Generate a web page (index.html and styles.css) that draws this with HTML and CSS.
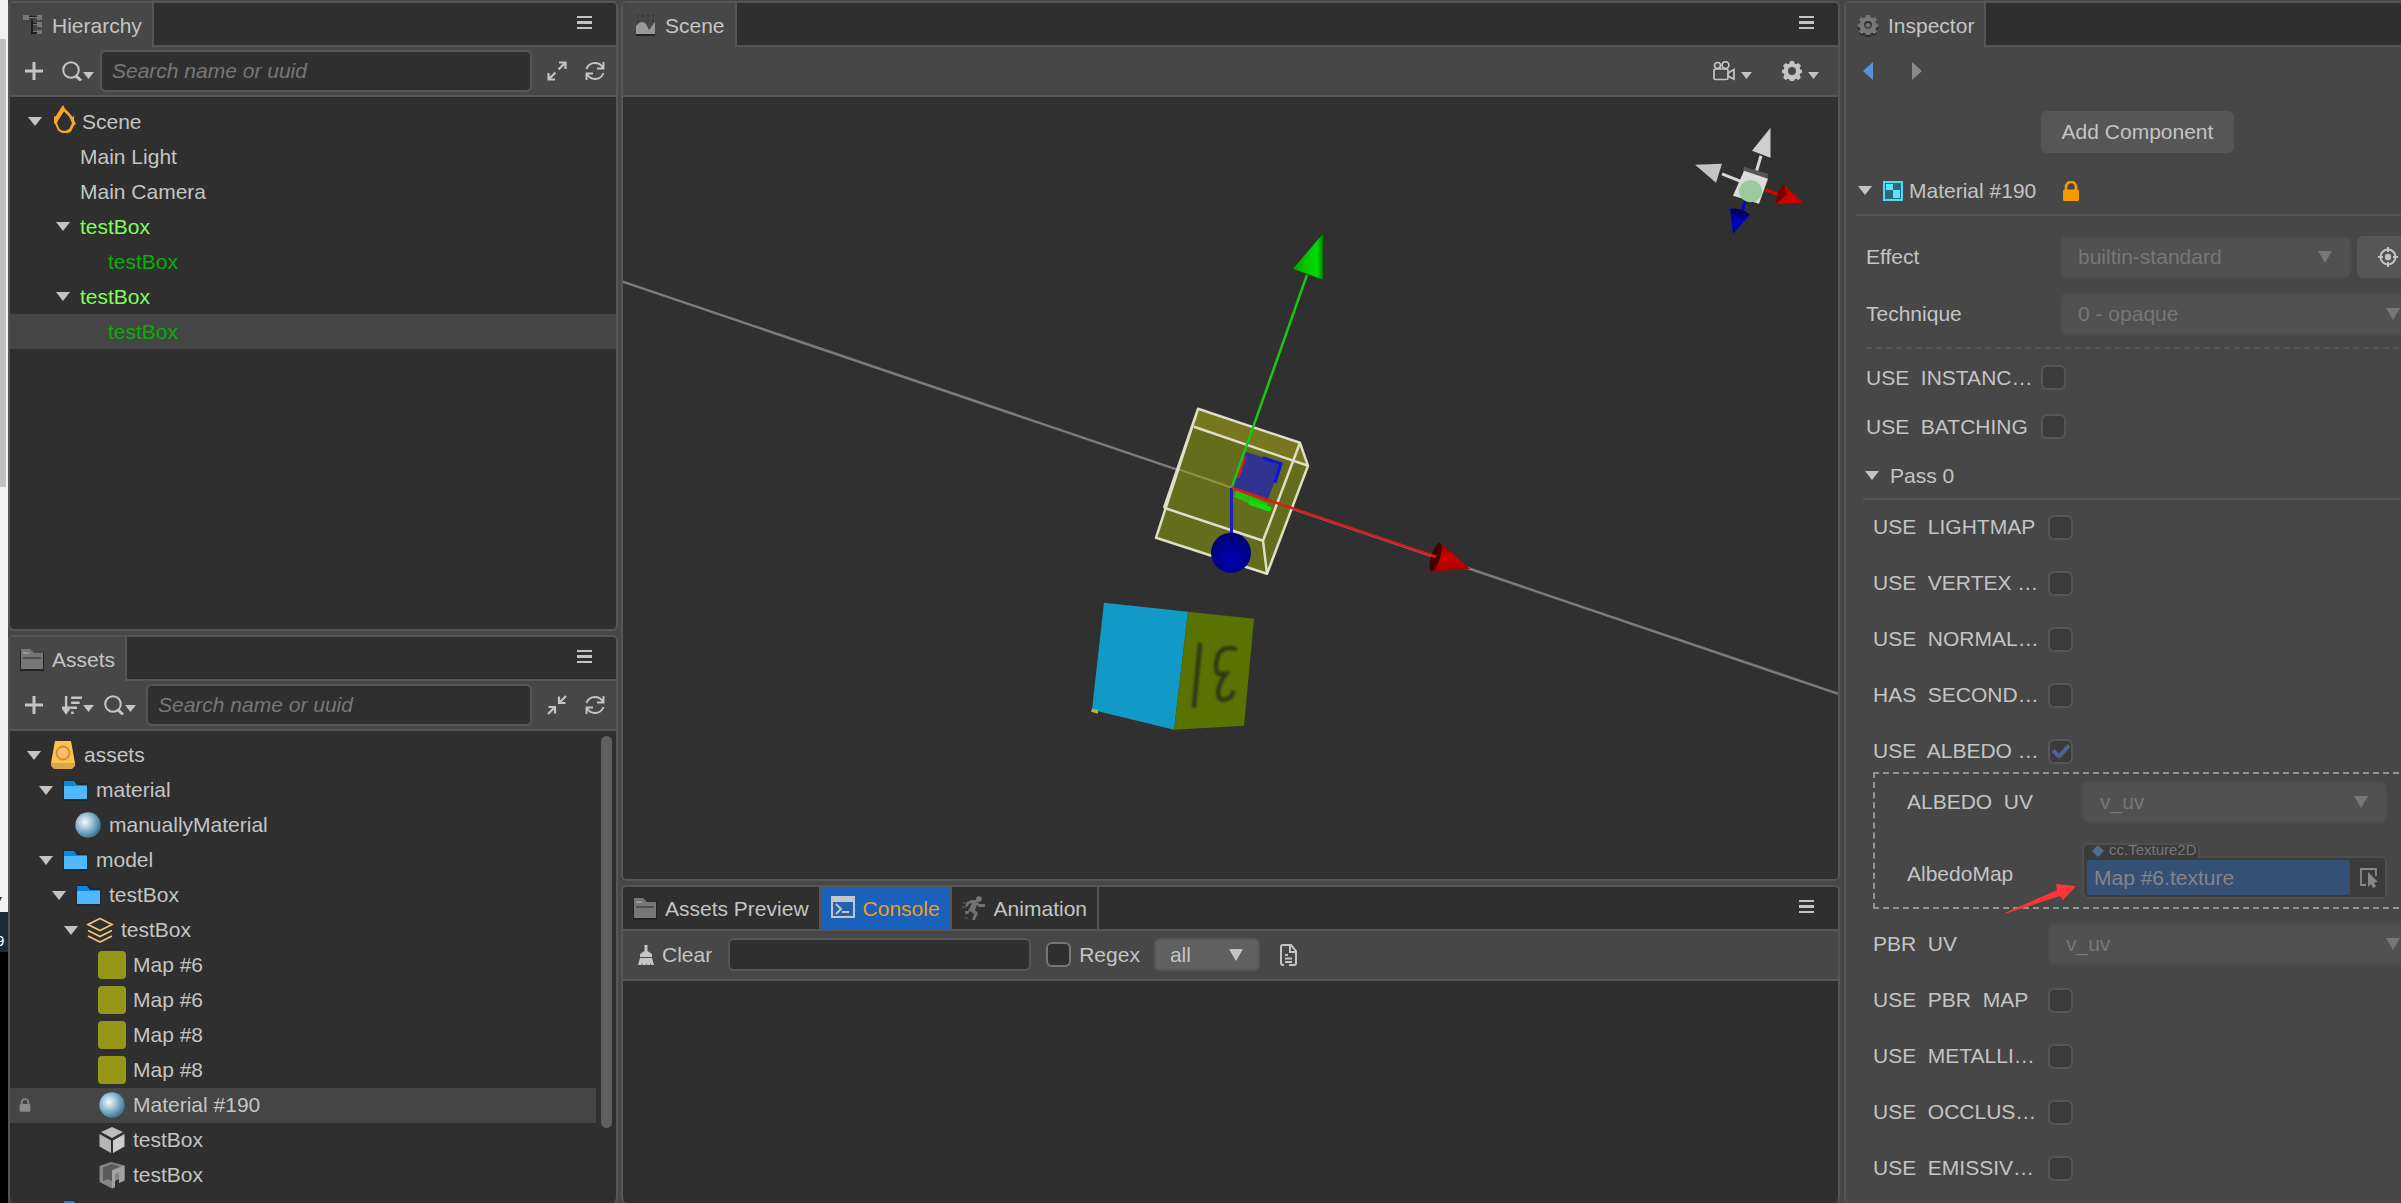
FILE: index.html
```html
<!DOCTYPE html>
<html lang="en">
<head>
<meta charset="utf-8">
<title>Scene Editor</title>
<link rel="stylesheet" href="styles.css">
</head>
<body>
<svg class="sprite" aria-hidden="true">
  <defs>
    <radialGradient id="ball" cx="38%" cy="38%" r="62%"><stop offset="0" stop-color="#f4fafc"/><stop offset=".4" stop-color="#a8cbdc"/><stop offset="1" stop-color="#417a9c"/></radialGradient>
    <linearGradient id="coneGreen" x1="0" x2="1"><stop offset="0" stop-color="#00a800"/><stop offset=".8" stop-color="#00dd00"/><stop offset="1" stop-color="#007a00"/></linearGradient>
    <linearGradient id="coneRed" x1="0" x2="0" y1="0" y2="1"><stop offset="0" stop-color="#8a0000"/><stop offset=".5" stop-color="#d00000"/><stop offset="1" stop-color="#a00000"/></linearGradient>
    <radialGradient id="coneBlue" cx="50%" cy="70%" r="60%"><stop offset="0" stop-color="#0000b4"/><stop offset="1" stop-color="#000078"/></radialGradient>
    <filter id="soft"><feGaussianBlur stdDeviation="1.2"/></filter>
  </defs>
  <symbol id="caret" viewBox="0 0 14 9"><path d="M0 0h14L7 9z"/></symbol>
  <symbol id="drop" viewBox="0 0 14 12"><path d="M0 0h14L7 12z"/></symbol>
  <symbol id="menu" viewBox="0 0 15 13"><path d="M0 0h15v2H0zM0 5h15v3H0zM0 11h15v2H0z"/></symbol>
  <symbol id="plus" viewBox="0 0 20 20"><path d="M8.500 1h3v7.500H19v3h-7.500V19h-3v-7.500H1v-3h7.500z"/></symbol>
  <symbol id="search" viewBox="0 0 20 20"><circle cx="9" cy="9" r="7.800" fill="none" stroke="currentColor" stroke-width="2"/><path d="M14 15l5 4.500" stroke="currentColor" stroke-width="3"/></symbol>
  <symbol id="expand" viewBox="0 0 20 20"><path d="M12 1.500h6.500V8M18 2l-6.500 6.500M1.500 12v6.500H8M2 18l6.500-6.500" fill="none" stroke="currentColor" stroke-width="2.200"/></symbol>
  <symbol id="shrink" viewBox="0 0 20 20"><path d="M12 1.500V8h6.500M12.500 7.500L19 1M1.500 12H8v6.500M7.500 12.500L1 19" fill="none" stroke="currentColor" stroke-width="2.200"/></symbol>
  <symbol id="refresh" viewBox="0 0 20 20"><path d="M1.500 8C3 4 6 2 10 2c3 0 6 1.500 8 4.500M18.500 1v6.500H12M18.500 12c-1.500 4-4.500 6-8.500 6-3 0-6-1.500-8-4.500M1.500 19v-6.500H8" fill="none" stroke="currentColor" stroke-width="1.900"/></symbol>
  <symbol id="sort" viewBox="0 0 22 20"><path d="M4.500 0v15M.5 13l4 5.500 4-5.500zM10 2h12M10 7.500h9.500M10 13h6.500M10 18.500h3" stroke="currentColor" stroke-width="2.600" fill="currentColor"/></symbol>
  <symbol id="tree" viewBox="0 0 24 24"><path d="M6 4v0h11M12 6v14h6M12 11h6" fill="none" stroke="#1f1f1f" stroke-width="2"/><path d="M3 2h6v5H3zM17 2h5v5h-5zM17 9h5v5h-5zM17 17h5v4h-5zM9 4h8v1H9zM11 5h2v14h4v-1h-4v-6h4v-1h-4V5z" fill="#777"/></symbol>
  <symbol id="folder-gray" viewBox="0 0 24 24"><path d="M0 3h10l4 3h10v18H0z" fill="#222"/><path d="M1 2h9l4 4h9v16H1z" fill="#777"/><path d="M3 10h18v2H3z" fill="#505050"/><path d="M3 5h5l2 2H3z" fill="#999"/></symbol>
  <symbol id="picture" viewBox="0 0 24 24"><path d="M3 21V13q6-7 10-2l3 6 6-8v12z" fill="#999"/><path d="M3 21h19v2H3z" fill="#222"/><path d="M4 2h2v2H4zM9 2h2v2H9zM14 2h2v2h-2zM19 2h2v2h-2zM14 7h2v2h-2zM19 7h2v2h-2zM4 7h2v2H4z" fill="#363636"/></symbol>
  <symbol id="gear" viewBox="0 0 20 20"><path fill-rule="evenodd" d="M8 0h4l.6 2.500 1.600.8L16.500 2 19 4.500l-1.400 2.300.6 1.700 1.800.5v3l-1.800.5-.7 1.700L19 16.500 16.500 19l-2.300-1.300-1.600.7L12 20H8l-.6-1.600-1.600-.7L3.500 19 1 16.500l1.500-2.300-.7-1.700L0 12V9l1.800-.5.6-1.700L1 4.500 3.500 2l2.300 1.300 1.600-.8zM10 6a4 4 0 1 0 0 8 4 4 0 0 0 0-8z"/></symbol>
  <symbol id="gear-tab" viewBox="0 0 24 24"><use href="#gear" x="2" y="4" width="20" height="20" fill="#2a2a2a"/><use href="#gear" x="2" y="2" width="20" height="20" fill="#777"/><circle cx="12" cy="12" r="2" fill="#777"/></symbol>
  <symbol id="console" viewBox="0 0 24 24"><path d="M0 0h24v22H0z" fill="#c6c6c6"/><path d="M2 6h20v14H2z" fill="#2262b4"/><path d="M5 8l5 5-5 5M11 16h7" fill="none" stroke="#c6c6c6" stroke-width="2"/></symbol>
  <symbol id="runner" viewBox="0 0 24 24"><circle cx="17" cy="3" r="2.800" fill="#7b7b7b"/><path d="M9 4h6l2 4h6v3h-6l-2-2-2 5 3 3-3 7h-3l2-6-4-3-2 3H3v-3h3l4-8-3 1-2 3-2-1 2-4z" fill="#707070"/><path d="M1 7h4M0 11h4M3 22h3" stroke="#555" stroke-width="1.500"/></symbol>
  <symbol id="camera" viewBox="0 0 22 20"><g fill="none" stroke="currentColor" stroke-width="1.700"><circle cx="4.500" cy="4.500" r="3"/><circle cx="12.500" cy="4" r="3.400"/><rect x="1" y="8" width="14" height="10.500" rx="1.500"/><path d="M15 12l6-3.500v9.500l-6-3z"/></g></symbol>
  <symbol id="flame" viewBox="0 0 22 28"><path fill-rule="evenodd" d="M9 0Q10.500 4 14.500 7l4 5 1.500-1.500V15l2 4-2 1.500-3 6-3 1.500H8l-4-2.500L1 19 0 18v-7l1.500.5L5 6zM10 6.500L5 14l-2 4 2.500 6 3 1.700h3.500l3.500-2.200L18 18l-3-6.500z" fill="#f5a62b"/></symbol>
  <symbol id="db" viewBox="0 0 28 28"><path d="M6 0h16l4 22H2z" fill="#ffc24b"/><path d="M2 22h24v3l-3 3H5l-3-3z" fill="#dba548"/><circle cx="14" cy="12" r="6.500" fill="#ffbd6a" stroke="#c99138" stroke-width="1.800"/></symbol>
  <symbol id="folder" viewBox="0 0 28 28"><path d="M2 4h12l4 3h9v18H2z" fill="#1f2a30"/><path d="M3 5h10l3 4h10v6H3z" fill="#0888da"/><path d="M3 10h23v13H3z" fill="#50b8ff"/></symbol>
  <symbol id="sphere" viewBox="0 0 28 28"><circle cx="14" cy="14" r="12.700" fill="url(#ball)"/></symbol>
  <symbol id="layers" viewBox="0 0 28 28"><path d="M14 2.500l12 6-12 6-12-6zM2 14.500l12 6 12-6M2 20l12 6 12-6" fill="none" stroke="#f1c66c" stroke-width="1.700"/></symbol>
  <symbol id="texture" viewBox="0 0 28 28"><rect width="28" height="28" rx="4" fill="#979717"/></symbol>
  <symbol id="cube" viewBox="0 0 28 28"><path d="M14 1l11 5-11 6L3 6z" fill="#bdbdbd"/><path d="M1.500 8L13 14.500V27L1.500 20.500z" fill="#b5b5b5"/><path d="M26.500 8L15 14.500V27l11.500-6.500z" fill="#cbcbcb"/></symbol>
  <symbol id="mesh" viewBox="0 0 28 28"><path d="M1.500 5L13 1l13.500 3.500v15L21 22v-4l-4 2v6l-3 1.500L1.500 21z" fill="#858585"/><path d="M5 6.500L14 3l8 2.500-8 4V20l-4-2-5 2z" fill="#5a5a5a"/><path d="M14 9.500l12.500-5v15L21 22V11l-4 2v13l-3 1.500z" fill="#a2a2a2"/></symbol>
  <symbol id="lock" viewBox="0 0 18 20"><path d="M4 9V6a5 5 0 0 1 10 0v3" fill="none" stroke="currentColor" stroke-width="2.600"/><rect x="1" y="8.500" width="16" height="11.500" rx="1.500"/></symbol>
  <symbol id="material" viewBox="0 0 20 20"><rect x="1" y="1" width="18" height="18" fill="#2b6a78" stroke="#4edcf5" stroke-width="2"/><path d="M3 3h7v6H3zM10 9h7v8h-7z" fill="#5be3fa"/></symbol>
  <symbol id="target" viewBox="0 0 20 20"><circle cx="10" cy="10" r="7.500" fill="none" stroke="currentColor" stroke-width="2"/><circle cx="10" cy="10" r="3.200"/><path d="M9 0h2v5H9zM9 15h2v5H9zM0 9h5v2H0zM15 9h5v2h-5z"/></symbol>
  <symbol id="broom" viewBox="0 0 16 20"><path d="M6.500 0h3v6l4.500 3v3H2V9l4.500-3zM2 13h12l2 7h-3l-1-2v2H9l-1-2v2H5l-1-1-1 1H0z"/></symbol>
  <symbol id="doc" viewBox="0 0 17 22"><path d="M4 21H3q-2 0-2-2V3q0-2 2-2h8l5 6v12q0 2-2 2H9M10 1v7h6M5 11h3M5 14.500h7M5 18h7" fill="none" stroke="currentColor" stroke-width="2"/></symbol>
  <symbol id="pick" viewBox="0 0 20 20"><path d="M6 17H1V1h15v7" fill="none" stroke="currentColor" stroke-width="1.800"/><path d="M8 4l10 10-4 .5 2 4-3 1.500-2-4-3 3z"/></symbol>
  <symbol id="check" viewBox="0 0 18 14"><path d="M1 6.500l6 6L17 1.500" fill="none" stroke="#4a6597" stroke-width="4"/></symbol>
</svg>

<div class="editor">
  <aside class="edge" aria-hidden="true">
    <span class="edge-thumb"></span><span class="edge-page">▾</span><span class="edge-bar">9</span><span class="edge-rest"></span>
  </aside>

  <div class="column">
    <section class="panel hierarchy">
      <header class="tabs">
        <div class="tab active"><svg class="i24"><use href="#tree"/></svg>Hierarchy</div>
        <button class="menu" aria-label="Menu"><svg><use href="#menu"/></svg></button>
      </header>
      <div class="toolbar">
        <button class="tool" aria-label="Add"><svg class="i20"><use href="#plus"/></svg></button>
        <button class="tool" aria-label="Search type"><svg class="i20"><use href="#search"/></svg><svg class="mini"><use href="#caret"/></svg></button>
        <input class="field search" type="text" placeholder="Search name or uuid" aria-label="Search nodes">
        <button class="end" aria-label="Expand all"><svg class="i20"><use href="#expand"/></svg></button>
        <button class="end" aria-label="Refresh"><svg class="i20"><use href="#refresh"/></svg></button>
      </div>
      <ul class="tree">
        <li class="row n0"><svg class="caret"><use href="#caret"/></svg><svg class="flame"><use href="#flame"/></svg>Scene</li>
        <li class="row n1"><span class="caret"></span>Main Light</li>
        <li class="row n1"><span class="caret"></span>Main Camera</li>
        <li class="row n1 prefab"><svg class="caret"><use href="#caret"/></svg>testBox</li>
        <li class="row n2 child"><span class="caret"></span>testBox</li>
        <li class="row n1 prefab"><svg class="caret"><use href="#caret"/></svg>testBox</li>
        <li class="row n2 child selected"><span class="caret"></span>testBox</li>
      </ul>
    </section>

    <section class="panel assets">
      <header class="tabs">
        <div class="tab active"><svg class="i24"><use href="#folder-gray"/></svg>Assets</div>
        <button class="menu" aria-label="Menu"><svg><use href="#menu"/></svg></button>
      </header>
      <div class="toolbar">
        <button class="tool" aria-label="Add"><svg class="i20"><use href="#plus"/></svg></button>
        <button class="tool wide" aria-label="Sort"><svg class="i20"><use href="#sort"/></svg><svg class="mini"><use href="#caret"/></svg></button>
        <button class="tool wide" aria-label="Search type"><svg class="i20"><use href="#search"/></svg><svg class="mini"><use href="#caret"/></svg></button>
        <input class="field search" type="text" placeholder="Search name or uuid" aria-label="Search assets">
        <button class="end" aria-label="Collapse all"><svg class="i20"><use href="#shrink"/></svg></button>
        <button class="end" aria-label="Refresh"><svg class="i20"><use href="#refresh"/></svg></button>
      </div>
      <div class="scroller">
        <ul class="tree">
          <li class="row a0"><svg class="caret"><use href="#caret"/></svg><svg class="i28"><use href="#db"/></svg>assets</li>
          <li class="row a1"><svg class="caret"><use href="#caret"/></svg><svg class="i28"><use href="#folder"/></svg>material</li>
          <li class="row a2"><span class="caret"></span><svg class="i28"><use href="#sphere"/></svg>manuallyMaterial</li>
          <li class="row a1"><svg class="caret"><use href="#caret"/></svg><svg class="i28"><use href="#folder"/></svg>model</li>
          <li class="row a2"><svg class="caret"><use href="#caret"/></svg><svg class="i28"><use href="#folder"/></svg>testBox</li>
          <li class="row a3"><svg class="caret"><use href="#caret"/></svg><svg class="i28"><use href="#layers"/></svg>testBox</li>
          <li class="row a4"><span class="caret"></span><svg class="i28"><use href="#texture"/></svg>Map #6</li>
          <li class="row a4"><span class="caret"></span><svg class="i28"><use href="#texture"/></svg>Map #6</li>
          <li class="row a4"><span class="caret"></span><svg class="i28"><use href="#texture"/></svg>Map #8</li>
          <li class="row a4"><span class="caret"></span><svg class="i28"><use href="#texture"/></svg>Map #8</li>
          <li class="row a4 selected"><svg class="row-lock"><use href="#lock"/></svg><span class="caret"></span><svg class="i28"><use href="#sphere"/></svg>Material #190</li>
          <li class="row a4"><span class="caret"></span><svg class="i28"><use href="#cube"/></svg>testBox</li>
          <li class="row a4"><span class="caret"></span><svg class="i28"><use href="#mesh"/></svg>testBox</li>
          <li class="row a1"><span class="caret"></span><svg class="i28"><use href="#folder"/></svg></li>
        </ul>
        <div class="scrollbar"><div class="thumb"></div></div>
      </div>
    </section>
  </div>

  <div class="column">
    <section class="panel scene">
      <header class="tabs">
        <div class="tab active"><svg class="i24"><use href="#picture"/></svg>Scene</div>
        <button class="menu" aria-label="Menu"><svg><use href="#menu"/></svg></button>
      </header>
      <div class="toolbar scene-tools">
        <button aria-label="Camera"><svg class="i22"><use href="#camera"/></svg><svg class="mini"><use href="#caret"/></svg></button>
        <button aria-label="Settings"><svg class="i20"><use href="#gear"/></svg><svg class="mini"><use href="#caret"/></svg></button>
      </div>
      <svg class="viewport" viewBox="623 96 1215 784" preserveAspectRatio="xMidYMid slice" role="img" aria-label="3D scene">
        <path d="M610 277.500L1850 698" stroke="#7c7c7c" stroke-width="2.500"/>
        <path d="M1198 409l102 34 8 23-41 108-111-36z" fill="#636d1b"/>
        <path d="M1198 409l102 34 8 23-114-39z" fill="#77771f"/>
        <path d="M1177 469l55 19" stroke="#8c9440" stroke-width="2"/>
        <path d="M1198 409l102 34 8 23-41 108-111-36zM1194 427l114 39M1164 508l99 33 37-98M1263 541l4 33M1198 409l-34 99" fill="none" stroke="#dedfc6" stroke-width="2.500" stroke-linejoin="round"/>
        <path d="M1245 452l37 11-14 36-35-11z" fill="#30338f"/>
        <path d="M1263 458l18 6-6 19" fill="none" stroke="#1111d8" stroke-width="3"/>
        <path d="M1235 494l32 13" stroke="#2abd0c" stroke-width="7"/><path d="M1251 503l18 6" stroke="#0ee00e" stroke-width="5" stroke-linecap="round"/>
        <path d="M1245 457l-7 21" stroke="#d01c2c" stroke-width="3"/>
        <path d="M1231.500 488V540" stroke="#1c20b8" stroke-width="3"/>
        <path d="M1232 487l75-212" stroke="#15c915" stroke-width="2.500"/>
        <path d="M1323 234v46l-30-11z" fill="url(#coneGreen)"/>
        <path d="M1232 488l204 69" stroke="#dc1a1a" stroke-width="2.500"/>
        <path d="M1440 543l30 26-38 3z" fill="url(#coneRed)"/><ellipse cx="1435.500" cy="557.500" rx="4.500" ry="15" transform="rotate(17 1435.500 557.500)" fill="#420000"/><path d="M1430 555l6 2" stroke="#dc1a1a" stroke-width="2.500"/>
        <circle cx="1231" cy="553" r="20" fill="url(#coneBlue)"/>
        <path d="M1104 603l84 9-14 118-82-20z" fill="#119ac6"/><path d="M1188 612l66 7-10 107-70 4z" fill="#5a7300"/><path d="M1092 709l6 1v4l-7-2z" fill="#b9b91a"/>
        <g fill="none" stroke="#2f3a16" stroke-width="4.500" stroke-linecap="round" filter="url(#soft)"><path d="M1200 645l-6 61"/><path d="M1235 649q-12-3-17 6-4 14 0 19l8 0q-8 10-8 20 2 9 10 5 4-2 5-6"/></g>
        <path d="M1761 156l-5 17" stroke="#d8d8d8" stroke-width="3"/><path d="M1770.500 128v30L1752 151z" fill="#cfcfcf"/>
        <path d="M1722 174l20 8" stroke="#d8d8d8" stroke-width="3"/><path d="M1695 165l27-1-6 19z" fill="#c4c4c4"/>
        <path d="M1744 167l24 7-1 8-24-9z" fill="#555"/><path d="M1744 171l24 8-9 25-26-8z" fill="#dcdcdc"/><ellipse cx="1750.500" cy="191.500" rx="11.500" ry="11" fill="#9cca9c"/>
        <path d="M1765 190l15 5" stroke="#e00000" stroke-width="3"/><path d="M1784 185l19 18-27 1z" fill="#cc0000"/><path d="M1784 185l3 10-11 9q1-14 8-19z" fill="#7a0000"/>
        <path d="M1745 201l-3 12" stroke="#0000d8" stroke-width="3"/><path d="M1730 209l20 6-17 19z" fill="#0000b8"/><path d="M1730 209q12-2 20 6l-8 4q-10-2-12-10z" fill="#000068"/>
      </svg>
    </section>

    <section class="panel console">
      <header class="tabs">
        <div class="tab"><svg class="i24"><use href="#folder-gray"/></svg>Assets Preview</div>
        <div class="tab current"><svg class="i24"><use href="#console"/></svg>Console</div>
        <div class="tab"><svg class="i24"><use href="#runner"/></svg>Animation</div>
        <button class="menu" aria-label="Menu"><svg><use href="#menu"/></svg></button>
      </header>
      <div class="toolbar console-tools">
        <button class="clear"><svg><use href="#broom"/></svg>Clear</button>
        <input class="field filter" type="text" aria-label="Filter logs">
        <label class="regex"><input class="tick" type="checkbox">Regex</label>
        <div class="select level"><select aria-label="Log level"><option>all</option></select><svg><use href="#drop"/></svg></div>
        <button aria-label="Open log file"><svg class="doc"><use href="#doc"/></svg></button>
      </div>
      <div class="log"></div>
    </section>
  </div>

  <section class="panel inspector">
    <header class="tabs">
      <div class="tab active"><svg class="i24"><use href="#gear-tab"/></svg>Inspector</div>
    </header>
    <nav class="history">
      <button class="back" aria-label="Back"><svg viewBox="0 0 10 18"><path d="M10 0v18L0 9z"/></svg></button>
      <button class="forward" aria-label="Forward"><svg viewBox="0 0 10 18"><path d="M0 0v18l10-9z"/></svg></button>
    </nav>
    <div class="body">
      <button class="add">Add Component</button>
      <h2 class="asset-head"><svg class="caret"><use href="#caret"/></svg><svg class="i20"><use href="#material"/></svg><span>Material #190</span><svg class="lock"><use href="#lock"/></svg></h2>
      <div class="effect">
        <div class="prop"><label for="effect">Effect</label><div class="select off"><select id="effect" disabled><option>builtin-standard</option></select><svg><use href="#drop"/></svg></div><button class="locate" aria-label="Locate"><svg class="i20"><use href="#target"/></svg></button></div>
        <div class="prop"><label for="tech">Technique</label><div class="select off"><select id="tech" disabled><option>0 - opaque</option></select><svg><use href="#drop"/></svg></div></div>
      </div>
      <div class="defines">
        <div class="prop"><label for="d1">USE  INSTANC…</label><input id="d1" class="tick" type="checkbox" disabled></div>
        <div class="prop"><label for="d2">USE  BATCHING</label><input id="d2" class="tick" type="checkbox" disabled></div>
      </div>
      <h3 class="pass-head"><svg class="caret"><use href="#caret"/></svg>Pass 0</h3>
      <div class="pass">
        <div class="prop"><label for="p1">USE  LIGHTMAP</label><input id="p1" class="tick" type="checkbox" disabled></div>
        <div class="prop"><label for="p2">USE  VERTEX …</label><input id="p2" class="tick" type="checkbox" disabled></div>
        <div class="prop"><label for="p3">USE  NORMAL…</label><input id="p3" class="tick" type="checkbox" disabled></div>
        <div class="prop"><label for="p4">HAS  SECOND…</label><input id="p4" class="tick" type="checkbox" disabled></div>
        <div>
          <div class="prop"><label for="p5">USE  ALBEDO …</label><span class="ticked"><input id="p5" class="tick" type="checkbox" checked disabled><svg><use href="#check"/></svg></span></div>
          <div class="group">
            <div class="prop"><label for="auv">ALBEDO  UV</label><div class="select off"><select id="auv" disabled><option>v_uv</option></select><svg><use href="#drop"/></svg></div></div>
            <div class="prop map"><label for="amap">AlbedoMap</label>
              <div class="asset">
                <div class="kind"><svg viewBox="0 0 12 12"><path d="M6 0l6 6-6 6-6-6z"/></svg><span>cc.Texture2D</span></div>
                <div class="slot"><input id="amap" type="text" value="Map #6.texture" disabled><button aria-label="Pick asset" disabled><svg class="i20"><use href="#pick"/></svg></button></div>
              </div>
            </div>
            <svg class="pointer" viewBox="0 0 70 32" aria-hidden="true"><path d="M0 30.500L51 8 50 2l20 2-13 14-3-4L0 31.500z" fill="#ff3535"/></svg>
          </div>
        </div>
        <div class="prop"><label for="puv">PBR  UV</label><div class="select off"><select id="puv" disabled><option>v_uv</option></select><svg><use href="#drop"/></svg></div></div>
        <div class="prop"><label for="p6">USE  PBR  MAP</label><input id="p6" class="tick" type="checkbox" disabled></div>
        <div class="prop"><label for="p7">USE  METALLI…</label><input id="p7" class="tick" type="checkbox" disabled></div>
        <div class="prop"><label for="p8">USE  OCCLUS…</label><input id="p8" class="tick" type="checkbox" disabled></div>
        <div class="prop"><label for="p9">USE  EMISSIV…</label><input id="p9" class="tick" type="checkbox" disabled></div>
      </div>
    </div>
  </section>
</div>
</body>
</html>
```

FILE: styles.css
```css
:root {
  --bar: #474747;
  --dark: #2f2f2f;
  --line: #565656;
  --text: #c4c4c4;
  --muted: #777;
}
* { box-sizing: border-box; }
body {
  margin: 0;
  overflow: hidden;
  background: var(--bar);
  color: var(--text);
  font: 21px/28px "Liberation Sans", Arial, sans-serif;
}
button, input, select { font: inherit; color: inherit; }
button { display: flex; align-items: center; padding: 0; border: 0; background: none; }
svg { flex: none; display: block; fill: currentColor; }
ul, h2, h3 { margin: 0; padding: 0; list-style: none; font: inherit; }
.sprite { position: absolute; width: 0; height: 0; }

.i20 { width: 20px; height: 20px; }
.i22 { width: 22px; height: 20px; }
.i24 { width: 24px; height: 24px; }
.i28 { width: 28px; height: 28px; }
.mini { width: 11px; height: 7px; }
.caret { flex: none; width: 14px; height: 9px; color: var(--text); }

/* The inspector is wider than the window and runs past its right edge. */
.editor {
  display: grid;
  grid-template-columns: 8px 610px minmax(0, 1fr) 590px;
  width: calc(100% + 33px);
  height: 100vh;
}
.column { display: flex; flex-direction: column; gap: 4px; padding-top: 1px; min-height: 0; }
.column + .column { margin: 0 4px 0 3px; }
.panel { display: flex; flex-direction: column; min-height: 0; overflow: hidden; border: 2px solid var(--line); border-radius: 6px; background: var(--dark); }
.hierarchy { flex: 629 1 0; }
.assets { flex: 569 1 0; border-bottom: 0; }
.scene { flex: 880 1 0; }
.console { flex: 318 1 0; border-bottom: 0; }
.inspector { margin-top: 1px; border-bottom: 0; background: var(--bar); }

.edge { display: flex; flex-direction: column; overflow: hidden; background: #f1f1f1; }
.edge-thumb { width: 6px; height: 448px; margin-top: 39px; background: #c0c0c0; }
.edge-page { height: 425px; padding-top: 400px; font-size: 12px; line-height: 25px; color: #333; text-indent: -4px; }
.edge-bar { height: 40px; background: #1b2c35; color: #fff; font-size: 15px; line-height: 58px; text-indent: -4px; }
.edge-rest { flex: 1; background: #000; }

.tabs { flex: none; display: flex; height: 44px; border-bottom: 2px solid var(--line); background: var(--dark); }
.tab { display: flex; align-items: center; gap: 8px; padding: 2px 10px 0; border-right: 2px solid var(--line); white-space: nowrap; }
.tab svg { margin-bottom: 2px; }
.tab.active { margin-bottom: -2px; background: var(--bar); }
.tab.current { background: #1961bb; color: #f39c12; }
.menu { align-self: center; margin: 0 24px 3px auto; }
.menu svg { width: 15px; height: 13px; }

.toolbar { flex: none; display: flex; align-items: center; height: 50px; padding: 0 11px 0 14px; border-bottom: 2px solid var(--line); background: var(--bar); }
.tool { width: 38px; }
.tool.wide { width: 42px; }
.mini { margin: 8px 0 0 1px; }
.end { margin-left: 18px; }
.search + .end { margin-left: 15px; }
.field { min-width: 0; border: 2px solid var(--line); border-radius: 6px; outline: 0; background: var(--dark); }
.search { flex: 1; height: 42px; padding: 0 10px; }
.search::placeholder { color: var(--muted); font-style: italic; }

.tree { flex: 1; padding-top: 7px; }
.row { display: flex; align-items: center; height: 35px; white-space: nowrap; }
.row.selected { position: relative; background: #454545; }
.n0 { padding-left: 18px; }
.n1 { padding-left: 46px; }
.n2 { padding-left: 74px; }
.hierarchy .caret { margin-right: 10px; }
.hierarchy .n0 .caret { margin-right: 12px; }
.flame { width: 22px; height: 28px; margin: 0 6px 6px 0; }
.prefab { color: #7fff54; }
.child { color: #07ae07; }
.scroller { display: flex; flex: 1; min-height: 0; overflow: hidden; }
.scroller .i28 { margin: 0 7px 0 8px; }
.a0 { padding-left: 17px; }
.a1 { padding-left: 29px; }
.a2 { padding-left: 42px; }
.a3 { padding-left: 54px; }
.a4 { padding-left: 66px; }
.row-lock { position: absolute; left: 9px; width: 12px; height: 14px; color: #8a8a8a; }
.scrollbar { width: 20px; padding: 5px 4px 0 5px; }
.thumb { height: 84%; border-radius: 6px; background: #606060; }

.scene-tools { justify-content: flex-end; gap: 30px; padding-right: 19px; }
.scene-tools .mini { margin-left: 6px; }
.viewport { flex: 1; width: 100%; min-height: 0; background: #303030; }

.console-tools { padding-left: 15px; }
.clear svg { width: 16px; height: 20px; margin-right: 8px; }
.filter { width: 303px; height: 33px; margin: 0 15px 0 16px; }
.regex { display: flex; align-items: center; gap: 8px; margin-right: 14px; }
.tick { appearance: none; flex: none; width: 25px; height: 25px; margin: 0; border: 2px solid var(--line); border-radius: 6px; background: #3b3b3b; }
.regex .tick { border-color: #777; background: var(--dark); }
.select { display: grid; align-items: center; }
.select > * { grid-area: 1 / 1; }
.select select { appearance: none; width: 100%; height: 42px; padding: 0 16px; border: 0; border-radius: 6px; background: #515151; outline: 0; }
.select svg { justify-self: end; width: 14px; height: 12px; margin-right: 19px; pointer-events: none; }
.select.off { flex: 1; color: var(--muted); }
.select.off select { opacity: 1; border: 2px solid #4d4d4d; }
.select.level { width: 106px; margin-right: 20px; }
.level select { height: 33px; background: #606060; border: 2px solid var(--line); padding: 0 14px; }
.level svg { margin-right: 17px; }
.doc { width: 17px; height: 22px; }
.log { flex: 1; }

.history { display: flex; gap: 39px; flex: none; height: 48px; padding: 0 17px; }
.history svg { width: 10px; height: 18px; }
.back { color: #5594d8; }
.forward { color: #8a8a8a; }
.body { padding: 16px 13px 0 10px; }
.add { height: 42px; margin: 0 auto; padding: 0 21px; border-radius: 6px; background: #565656; }
.asset-head { display: flex; align-items: center; height: 49px; margin-top: 14px; padding-left: 2px; border-bottom: 2px solid var(--line); }
.asset-head .i20 { margin: 0 6px 0 11px; }
.asset-head .lock { width: 18px; height: 20px; margin-left: 26px; color: #f59a00; }
.prop { display: flex; align-items: center; min-height: 42px; }
.prop label { flex: none; width: 175px; white-space: pre; }
.effect { display: grid; gap: 15px; margin-left: 10px; padding: 20px 0 12px; border-bottom: 2px dashed var(--line); }
.effect .prop label { width: 194px; }
.locate { justify-content: center; width: 62px; height: 42px; margin-left: 6px; border-radius: 6px; background: #565656; }
.defines { padding: 4px 0 0 10px; }
.defines .prop { height: 49px; }
.pass-head { display: flex; align-items: center; gap: 11px; height: 49px; margin-left: 7px; padding: 2px 0 0 2px; border-bottom: 2px solid var(--line); }
.pass { display: flex; flex-direction: column; gap: 14px; padding: 6px 0 0 17px; }
.ticked { display: grid; place-items: center; }
.ticked > * { grid-area: 1 / 1; }
.ticked svg { width: 18px; height: 14px; }
.group { position: relative; display: flex; flex-direction: column; gap: 20px; padding: 7px 30px 8px 32px; border: 2px dashed #949494; }
.map label { padding-top: 6px; }
.asset { flex: 1; min-width: 0; height: 56px; color: var(--muted); }
.kind { position: relative; display: flex; align-items: flex-start; gap: 5px; width: 118px; height: 15px; margin-bottom: -2px; padding: 0 8px; overflow: hidden; border: solid #4f4f4f; border-width: 2px 2px 0; border-radius: 6px 6px 0 0; background: #3b3b3b; font-size: 15px; line-height: 10px; }
.kind svg { width: 12px; height: 12px; color: #4d6d94; }
.slot { display: flex; align-items: center; height: 43px; padding: 0 5px 0 3px; border: 2px solid #4f4f4f; border-radius: 0 6px 6px 6px; background: #3b3b3b; }
.slot input { flex: 1; min-width: 0; height: 35px; margin-right: 10px; padding: 0 7px; border: 0; border-radius: 2px; background: #345074; color: #858585; }
.slot button { color: #8a8a8a; }
.pointer { position: absolute; left: 131px; bottom: -7px; width: 70px; height: 32px; }
```
